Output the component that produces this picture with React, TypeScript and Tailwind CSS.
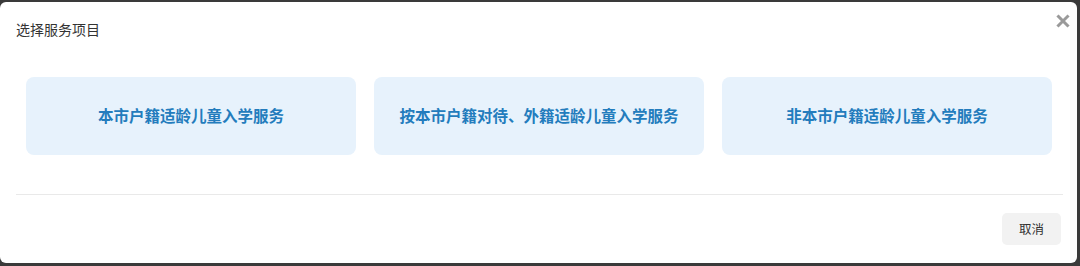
import React from "react";

const cards = [
  "本市户籍适龄儿童入学服务",
  "按本市户籍对待、外籍适龄儿童入学服务",
  "非本市户籍适龄儿童入学服务",
];

export default function App() {
  return (
    <div
      className="w-[1080px] h-[266px] bg-[#3a3a3a] pt-[2px] overflow-hidden"
      style={{ fontFamily: '"Noto Sans CJK SC", "Noto Sans", sans-serif' }}
    >
      <div className="w-[1077px] h-[261px] bg-white rounded-[6px] flex flex-col">
        <div className="flex items-start justify-between pl-[16px] pr-[7px] pt-[17px]">
          <div className="text-[14px] leading-[20px] text-[#333333]">选择服务项目</div>
          <svg width="14" height="14" viewBox="0 0 14 14" className="mt-[-5px]">
            <path d="M2.5 2.5 L11.5 11.5 M11.5 2.5 L2.5 11.5" stroke="#9a9a9a" strokeWidth="3" strokeLinecap="square" />
          </svg>
        </div>
        <div className="grid grid-cols-3 gap-[18px] pl-[26px] pr-[25px] mt-[38px]">
          {cards.map((c) => (
            <div
              key={c}
              className="h-[78px] rounded-[8px] bg-[#e7f2fc] flex items-center justify-center text-[15.5px] font-bold text-[#237cbd]"
            >
              {c}
            </div>
          ))}
        </div>
        <div className="mx-[16px] mt-[39px] h-px bg-[#e9e9e9] w-[1047px]" />
        <div className="flex justify-end pr-[16px] mt-[18px]">
          <div className="w-[59px] h-[32px] rounded-[5px] bg-[#f2f2f2] flex items-center justify-center text-[12.5px] text-[#333333]">
            取消
          </div>
        </div>
      </div>
    </div>
  );
}
